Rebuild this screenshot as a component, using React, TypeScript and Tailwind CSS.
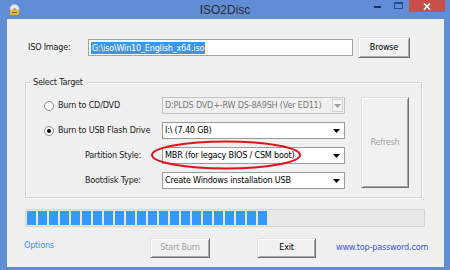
import React from "react";

const font = { fontFamily: '"DejaVu Sans Condensed", "Liberation Sans", sans-serif' };

function Arrow({ disabled }: { disabled?: boolean }) {
  return (
    <svg width="7" height="4" viewBox="0 0 7 4">
      <path d="M0 0 H7 L3.5 4 Z" fill={disabled ? "#a0a0a0" : "#000"} />
    </svg>
  );
}

function Combo({ text, disabled }: { text: string; disabled?: boolean }) {
  return (
    <div
      className={
        "flex h-[17px] w-[183px] items-center border " +
        (disabled ? "border-[#c4c4c4] bg-[#f0f0f0] text-[#7a7a7a]" : "border-[#9c9c9c] bg-white text-black")
      }
    >
      <div className="flex-1 truncate pl-[2px] leading-none">{text}</div>
      {disabled ? (
        <div className="mr-[1px] flex h-[13px] w-[11px] items-center justify-center border border-[#d2d2d2] bg-[#f4f4f4]">
          <Arrow disabled />
        </div>
      ) : (
        <div className="mr-[1px] flex h-[13px] w-[13px] items-center justify-center">
          <Arrow />
        </div>
      )}
    </div>
  );
}

function Radio({ checked }: { checked?: boolean }) {
  return (
    <div className="flex h-[10px] w-[10px] items-center justify-center rounded-full border border-[#8c8c8c] bg-white">
      {checked && <div className="h-[4px] w-[4px] rounded-full bg-black" />}
    </div>
  );
}

function Btn({ children, className, disabled }: { children: React.ReactNode; className: string; disabled?: boolean }) {
  return (
    <div
      className={
        "flex items-center justify-center border-t border-l border-b border-r border-t-[#e2e2e2] border-l-[#e2e2e2] border-b-[#707070] border-r-[#707070] bg-[#f1f1f1] shadow-[inset_1px_1px_0_#ffffff,inset_-1px_-1px_0_#a8a8a8] " +
        (disabled ? "text-[#a3a3a3] " : "text-black ") +
        className
      }
    >
      {children}
    </div>
  );
}

export default function App() {
  const blocks = Array.from({ length: 22 });
  return (
    <div className="relative flex h-[270px] w-[450px] flex-col overflow-hidden bg-[#608dd6] text-[9px] tracking-[-0.2px]" style={font}>
      {/* title bar */}
      <div className="grid h-[19px] grid-cols-[1fr_auto_1fr] items-center">
        <div className="pl-[8px]">
          <svg width="13" height="12" viewBox="0 0 13 12">
            <circle cx="6.5" cy="5" r="4.6" fill="#e9e9e9" stroke="#b8b8b8" strokeWidth="0.6" />
            <circle cx="6.5" cy="5" r="1.2" fill="#9a9a9a" />
            <rect x="2" y="6" width="9" height="5" rx="1" fill="#e8c23a" stroke="#b8921a" strokeWidth="0.5" />
            <rect x="4" y="8" width="5" height="1" fill="#7a5a10" />
          </svg>
        </div>
        <div className="text-[12px] tracking-normal text-[#2c2c2c]" style={{ fontFamily: '"Liberation Sans", sans-serif' }}>
          ISO2Disc
        </div>
        <div className="flex h-full items-start justify-end">
          <div className="mr-[13px] mt-[6px] h-[2px] w-[7px] bg-[#1e2f55]" />
          <div className="mr-[6px] mt-[2px] h-[7px] w-[9px] border border-[#2a4a8a] border-t-2" />
          <div className="mr-[5px] flex h-[12px] w-[36px] items-center justify-center bg-[#c7504a]">
            <svg width="8" height="7" viewBox="0 0 8 7">
              <path d="M1 0.5 L7 6.5 M7 0.5 L1 6.5" stroke="#fff" strokeWidth="1.6" />
            </svg>
          </div>
        </div>
      </div>

      {/* client */}
      <div className="ml-[7px] mr-[6px] flex h-[248px] flex-col bg-[#f0f0f0] text-[#1b1b1b]">
        {/* ISO row */}
        <div className="mt-[18px] flex h-[21px] items-center pl-[21px]">
          <div className="w-[60px]">ISO Image:</div>
          <div className="flex h-[17px] w-[265px] items-center border border-[#a3a3a3] bg-white pl-[2px]">
            <span className="bg-[#3399ff] px-[1px] leading-[12px] text-white">G:\iso\Win10_English_x64.iso</span>
          </div>
          <Btn className="ml-[5px] h-[21px] w-[52px]">Browse</Btn>
        </div>

        {/* group box */}
        <div className="relative ml-[18px] mt-[24px] flex h-[116px] w-[397px] border border-[#d3d3d3] shadow-[inset_1px_1px_0_#ffffff,1px_1px_0_#ffffff]">
          <div className="absolute left-[5px] top-[-6px] bg-[#f0f0f0] px-[2px] leading-[11px]">Select Target</div>
          <div className="flex flex-col gap-[8px] pl-[18px] pt-[14px]">
            <div className="flex h-[17px] items-center">
              <div className="flex w-[118px] items-center gap-[4px]">
                <Radio />
                <span>Burn to CD/DVD</span>
              </div>
              <Combo text="D:PLDS DVD+-RW DS-8A9SH (Ver ED11)" disabled />
            </div>
            <div className="flex h-[17px] items-center">
              <div className="flex w-[118px] items-center gap-[4px]">
                <Radio checked />
                <span>Burn to USB Flash Drive</span>
              </div>
              <Combo text="I:\ (7.40 GB)" />
            </div>
            <div className="flex h-[17px] items-center">
              <div className="w-[118px] pl-[41px]">Partition Style:</div>
              <Combo text="MBR (for legacy BIOS / CSM boot)" />
            </div>
            <div className="flex h-[17px] items-center">
              <div className="w-[118px] pl-[41px]">Bootdisk Type:</div>
              <Combo text="Create Windows installation USB" />
            </div>
          </div>
          <Btn disabled className="ml-[16px] mt-[14px] h-[91px] w-[48px]">
            Refresh
          </Btn>
        </div>

        {/* progress */}
        <div className="ml-[18px] mt-[11px] flex h-[18px] w-[400px] items-center gap-[2px] border border-[#d4d4d4] bg-[#e8e8e8] px-[1px]">
          {blocks.map((_, i) => (
            <div key={i} className="h-[14px] w-[9px] bg-[#3399ff]" />
          ))}
        </div>

        {/* bottom row */}
        <div className="mt-[11px] flex h-[20px] items-center">
          <div className="mb-[5px] ml-[17px] w-[126px] text-[#3f91f2]">Options</div>
          <Btn disabled className="h-[20px] w-[60px]">
            Start Burn
          </Btn>
          <Btn className="ml-[47px] h-[20px] w-[59px]">Exit</Btn>
          <div className="ml-[20px] text-[#3457d6]">www.top-password.com</div>
        </div>
      </div>

      {/* red annotation ellipse */}
      <svg className="pointer-events-none absolute left-0 top-0" width="450" height="270">
        <ellipse cx="226" cy="155" rx="74" ry="13.5" fill="none" stroke="#e3131b" strokeWidth="2" />
      </svg>
    </div>
  );
}
